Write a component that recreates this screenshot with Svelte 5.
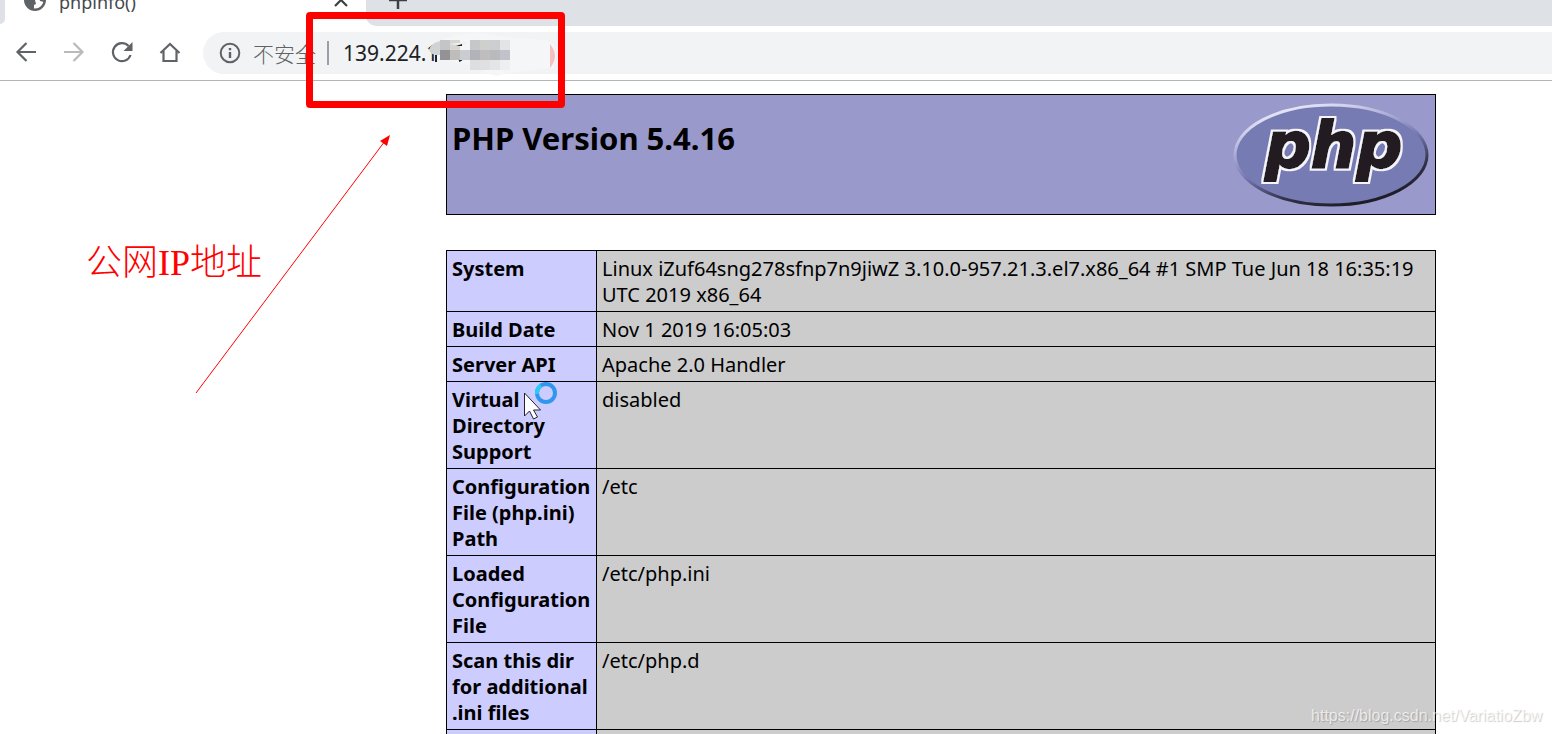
<script lang="ts">
  const info = [
    {
      name: 'System',
      value: 'Linux iZuf64sng278sfnp7n9jiwZ 3.10.0-957.21.3.el7.x86_64 #1 SMP Tue Jun 18 16:35:19 UTC 2019 x86_64'
    },
    { name: 'Build Date', value: 'Nov 1 2019 16:05:03' },
    { name: 'Server API', value: 'Apache 2.0 Handler' },
    { name: 'Virtual Directory Support', value: 'disabled' },
    { name: 'Configuration File (php.ini) Path', value: '/etc' },
    { name: 'Loaded Configuration File', value: '/etc/php.ini' },
    { name: 'Scan this dir for additional .ini files', value: '/etc/php.d' },
    { name: '\u00a0', value: '\u00a0' }
  ];

  // x, y, width, height, fill
  const mosaic: [number, number, number, number, string][] = [
    [10, 0, 10, 10, '#c4c5c6'],
    [20, 0, 10, 10, '#d6d5d1'],
    [40, 0, 10, 10, '#c6c7ca'],
    [50, 0, 10, 10, '#cfcfcd'],
    [60, 0, 10, 10, '#cdced0'],
    [70, 0, 10, 10, '#e2e4e7'],
    [10, 10, 10, 10, '#929297'],
    [20, 10, 10, 10, '#bfbdba'],
    [30, 10, 10, 10, '#c9cdd2'],
    [40, 10, 10, 10, '#b1b3b8'],
    [50, 10, 10, 10, '#bfbdbd'],
    [60, 10, 10, 10, '#b9babd'],
    [70, 10, 10, 10, '#c0c3c9'],
    [40, 20, 10, 10, '#dcdedf'],
    [50, 20, 10, 10, '#dfe0e1'],
    [60, 20, 10, 10, '#e3e5e7'],
    [70, 20, 10, 10, '#edf0f1']
  ];

  let address = $state('139.224.1');
</script>

<div class="window">
  <header>
    <div class="tab-strip">
      <div class="prev-tab"></div>
      <div class="tab">
        <svg class="globe" width="22" height="22" viewBox="0 0 22 22">
          <circle cx="11" cy="11" r="9.800" fill="#fff" stroke="#5f6368" stroke-width="2.400" />
          <path d="M1 9l4 1 6 1 1 4-2 1v4C4 20 0 15 1 9z" fill="#5f6368" />
          <path d="M10 1h8l3 9-1 3-4-1-1-3-4-1-1-3z" fill="#5f6368" />
        </svg>
        <span class="title">phpinfo()</span>
        <button class="close" aria-label="Close tab">
          <svg width="14" height="14" viewBox="0 0 14 14" stroke="#3c4043" stroke-width="2.200">
            <path d="M1 1l12 12M13 1L1 13" />
          </svg>
        </button>
      </div>
      <div class="rest">
        <button aria-label="New tab">
          <svg width="18" height="18" viewBox="0 0 18 18" stroke="#3c4043" stroke-width="2.500">
            <path d="M9 0v18M0 9h18" />
          </svg>
        </button>
      </div>
    </div>

    <nav class="toolbar">
      <button aria-label="Back">
        <svg width="24" height="24" viewBox="0 0 24 24" fill="none" stroke="#5f6368" stroke-width="2.200">
          <path d="M22 11H4M12.500 2L3.500 11l9 9" />
        </svg>
      </button>
      <button aria-label="Forward" disabled>
        <svg width="24" height="24" viewBox="0 0 24 24" fill="none" stroke="#bababa" stroke-width="2.200">
          <path d="M2 11h18M11.500 2l9 9-9 9" />
        </svg>
      </button>
      <button aria-label="Reload">
        <svg width="24" height="24" viewBox="0 0 24 24" fill="none" stroke="#5f6368" stroke-width="2.200">
          <path d="M20.500 14A9 9 0 1 1 18.500 5" />
          <path d="M22.500 1v9h-9z" fill="#5f6368" stroke="none" />
        </svg>
      </button>
      <button aria-label="Home">
        <svg width="24" height="24" viewBox="0 0 24 24" fill="none" stroke="#5f6368" stroke-width="2.200">
          <path d="M2.500 12L12 3l9.500 9" />
          <path d="M5.500 10v10h13V10" />
        </svg>
      </button>

      <div class="omnibox">
        <svg width="22" height="22" viewBox="0 0 22 22" fill="none" stroke="#5f6368" stroke-width="2">
          <circle cx="11" cy="11" r="9.300" />
          <path d="M11 10v6M11 6v2.200" stroke-width="2.400" />
        </svg>
        <span class="insecure">不安全</span>
        <span class="divider"></span>
        <input type="text" aria-label="Address" bind:value={address} />
      </div>
    </nav>
  </header>

  <main>
    <div class="banner">
      <h1>PHP Version 5.4.16</h1>
      <a href="http://www.php.net/" aria-label="PHP">
        <svg width="197" height="110" viewBox="0 0 197 110">
          <defs>
            <linearGradient id="rim" x1="0.250" y1="0" x2="0.750" y2="1">
              <stop offset="0" stop-color="#eeeefa" />
              <stop offset="0.250" stop-color="#b7b8de" />
              <stop offset="0.500" stop-color="#777bb4" />
              <stop offset="0.750" stop-color="#33334a" />
              <stop offset="1" stop-color="#18181f" />
            </linearGradient>
            <filter id="outline" x="-10%" y="-10%" width="120%" height="120%">
              <feMorphology in="SourceAlpha" operator="dilate" radius="1.500" result="grown" />
              <feFlood flood-color="#f4f4fa" />
              <feComposite in2="grown" operator="in" />
              <feMerge>
                <feMergeNode />
                <feMergeNode in="SourceGraphic" />
              </feMerge>
            </filter>
          </defs>
          <ellipse cx="98" cy="56" rx="96" ry="50" fill="#777bb4" stroke="url(#rim)" stroke-width="3" />
          <text x="32" y="69" filter="url(#outline)">php</text>
        </svg>
      </a>
    </div>

    <table>
      <tbody>
        {#each info as row}
          <tr>
            <th scope="row">{row.name}</th>
            <td>{row.value}</td>
          </tr>
        {/each}
      </tbody>
    </table>
  </main>

  <svg class="smudge" width="134" height="50" viewBox="0 0 134 50">
    <path d="M8 12Q40 -4 76 6L120 9Q134 16 126 37L80 42 70 45 60 42 40 33 8 27Z" fill="#f4f6f7" />
    <path d="M20 9Q4 10 2 19q2 5 8 5h10z" fill="#d0d3d3" />
    <path d="M9 24v7M35 24q1 5-3 6" fill="none" stroke="#222" stroke-width="2" />
    <g transform="translate(3 9)">
      {#each mosaic as [x, y, width, height, fill]}
        <rect {x} {y} {width} {height} {fill} />
      {/each}
    </g>
    <path d="M22 13l18-2-4 4z" fill="#eef0f1" />
    <path d="M29 15l6-2v2z" fill="#222" />
    <path d="M123 13q10 12 0 24z" fill="#f6bfc1" />
  </svg>

  <div class="frame"></div>
  <p class="note">公网IP地址</p>
  <svg class="arrow" width="196" height="262" viewBox="0 0 196 262">
    <path d="M1 259L190 7" stroke="#f00" />
    <path d="M195 1l-3 11-7-5z" fill="#f00" />
  </svg>

  <svg class="cursor" width="36" height="42" viewBox="0 0 36 42">
    <path d="M1.500 12v23l5-5 4 8 4-2-4-7h7z" fill="#fff" stroke="#223" />
    <circle cx="23" cy="12" r="9" fill="none" stroke="#2f97ee" stroke-width="4" />
    <path d="M14 13a9 9 0 0 1 4-8.500" fill="none" stroke="#2bcbf8" stroke-width="4" />
  </svg>

  <span class="watermark">https://blog.csdn.net/VariatioZbw</span>
</div>

<style>
  :global(body) {
    margin: 0;
    background: #fff;
  }

  .window {
    position: relative;
    height: 100vh;
    overflow: hidden;
    font-family: 'Noto Sans', 'Noto Sans CJK SC', sans-serif;
    color: #000;
  }

  button {
    display: flex;
    padding: 0;
    border: none;
    background: none;
  }

  header {
    border-bottom: 1px solid #b4b5b7;
  }

  .tab-strip {
    display: flex;
    height: 26px;
    overflow: hidden;
  }

  .prev-tab {
    width: 5px;
    height: 24px;
    background: #dee1e6;
    border-bottom-right-radius: 5px;
  }

  .tab {
    display: flex;
    align-items: flex-end;
    box-sizing: border-box;
    width: 361px;
    height: 26px;
    padding: 0 18px 15px 19px;
  }

  .tab svg {
    flex: none;
  }

  .close {
    margin-bottom: 4px;
  }

  .title {
    flex: 1;
    margin-left: 13px;
    font-size: 18px;
    line-height: 18px;
    color: #45494d;
  }

  .rest {
    display: flex;
    flex: 1;
    align-items: flex-end;
    padding: 0 23px 17px;
    background: #dee1e6;
    border-bottom-left-radius: 10px;
  }

  .toolbar {
    display: flex;
    align-items: center;
    gap: 24px;
    height: 54px;
    padding-left: 14px;
  }

  .omnibox {
    display: flex;
    flex: 1;
    align-items: center;
    height: 42px;
    margin-left: -3px;
    padding-left: 16px;
    background: #f1f3f4;
    border-radius: 21px 0 0 21px;
  }

  .insecure {
    margin-left: 12px;
    font-family: 'Noto Sans CJK SC', sans-serif;
    font-size: 21px;
    font-weight: 300;
    color: #5f6368;
  }

  .divider {
    width: 2px;
    height: 24px;
    margin: 0 14px 0 11px;
    background: #9aa0a6;
  }

  input {
    flex: 1;
    padding: 0;
    border: none;
    outline: none;
    background: none;
    font-family: inherit;
    font-size: 21px;
    color: #202124;
  }

  main {
    margin: 13px 116px 0 446px;
  }

  .banner {
    display: flex;
    justify-content: space-between;
    align-items: flex-start;
    padding: 4px 5px;
    border: 1px solid #000;
    background: #9999cc;
  }

  .banner a {
    display: flex;
    padding-bottom: 1px;
  }

  .banner text {
    font-family: 'DejaVu Sans', sans-serif;
    font-size: 64px;
    font-weight: bold;
    font-style: italic;
    fill: #231f20;
    stroke: #231f20;
    stroke-width: 2px;
  }

  h1 {
    margin: 18px 0 0;
    font-size: 31px;
    line-height: 42px;
  }

  table {
    width: 100%;
    margin-top: 35px;
    border-collapse: collapse;
    table-layout: fixed;
  }

  th,
  td {
    padding: 5px 5px 3px;
    border: 1px solid #000;
    font-size: 20px;
    line-height: 26px;
    text-align: left;
    vertical-align: top;
  }

  th {
    width: 139px;
    background: #ccccff;
  }

  td {
    background: #cccccc;
  }

  .smudge {
    position: absolute;
    top: 31px;
    left: 427px;
  }

  .frame {
    position: absolute;
    top: 12px;
    left: 306px;
    width: 245px;
    height: 82px;
    border: 7px solid #f00;
    border-radius: 4px;
  }

  .note {
    position: absolute;
    top: 242px;
    left: 86px;
    margin: 0;
    font-family: 'Liberation Serif', 'Noto Sans CJK SC', serif;
    font-size: 36px;
    font-weight: 300;
    line-height: 42px;
    color: #f00;
  }

  .arrow {
    position: absolute;
    top: 134px;
    left: 195px;
  }

  .cursor {
    position: absolute;
    top: 381px;
    left: 523px;
  }

  .watermark {
    position: absolute;
    right: 10px;
    bottom: 8px;
    font-family: 'Liberation Sans', sans-serif;
    font-size: 16px;
    line-height: 20px;
    color: rgba(255, 255, 255, 0.7);
    text-shadow: 1px 1px 1px rgba(0, 0, 0, 0.2);
  }
</style>
